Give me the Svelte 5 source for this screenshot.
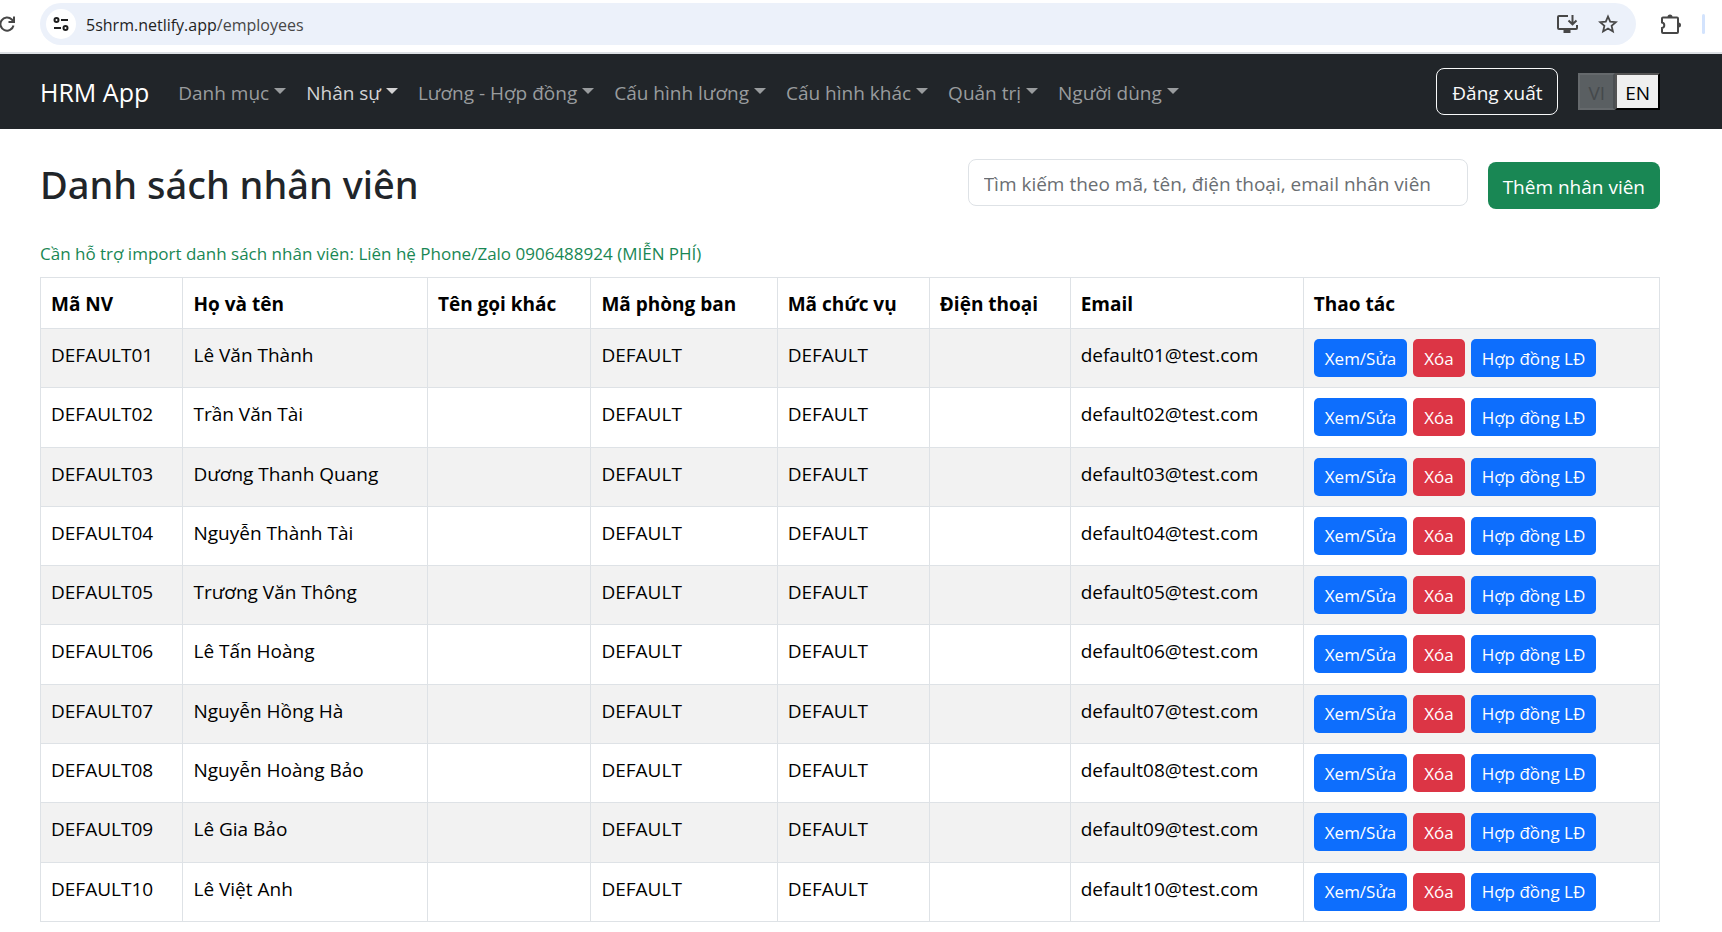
<script lang="ts">
  const menus = ['Danh mục', 'Nhân sự', 'Lương - Hợp đồng', 'Cấu hình lương', 'Cấu hình khác', 'Quản trị', 'Người dùng'];
  const names = [
    'Lê Văn Thành',
    'Trần Văn Tài',
    'Dương Thanh Quang',
    'Nguyễn Thành Tài',
    'Trương Văn Thông',
    'Lê Tấn Hoàng',
    'Nguyễn Hồng Hà',
    'Nguyễn Hoàng Bảo',
    'Lê Gia Bảo',
    'Lê Việt Anh'
  ];
  const employees = names.map((name, i) => {
    const no = String(i + 1).padStart(2, '0');
    return { code: `DEFAULT${no}`, name, alias: '', department: 'DEFAULT', position: 'DEFAULT', phone: '', email: `default${no}@test.com` };
  });

  let active = $state('Nhân sự');
  let lang = $state('vi');
  let search = $state('');
</script>

<div class="browser">
  <button class="icon reload" aria-label="Reload">
    <svg width="18" height="18" viewBox="0 0 18 18" fill="none" stroke="#474747" stroke-width="2">
      <path d="M15.500 10.500a6.600 6.600 0 1 1-1.700-6L16 7" />
      <path d="M16 1.500V7h-5.500" />
    </svg>
  </button>
  <div class="address">
    <button class="icon site" aria-label="Site information">
      <svg width="18" height="18" viewBox="0 0 18 18" fill="none" stroke="#1f1f1f" stroke-width="2">
        <circle cx="4.500" cy="5" r="2" />
        <path d="M9 5h7M2 13h7" />
        <circle cx="13.500" cy="13" r="2" />
      </svg>
    </button>
    <span class="url">5shrm.netlify.app<span>/employees</span></span>
    <button class="icon" aria-label="Install app">
      <svg width="22" height="20" viewBox="0 0 22 20" fill="none" stroke="#474747" stroke-width="2">
        <path d="M12 2H3a1 1 0 0 0-1 1v11a1 1 0 0 0 1 1h17a1 1 0 0 0 1-1v-3" />
        <path d="M16.500 1v9M12.500 6.500l4 3.800 4-3.800" />
        <path d="M7.500 17.500h7" stroke-width="3" />
      </svg>
    </button>
    <button class="icon" aria-label="Bookmark this page">
      <svg width="20" height="20" viewBox="0 0 20 20" fill="none" stroke="#474747" stroke-width="1.8">
        <path d="M10 2.500l2.200 5.200 5.600.5-4.200 3.700 1.300 5.500L10 14.500l-4.900 2.900 1.300-5.500-4.200-3.700 5.600-.5z" />
      </svg>
    </button>
  </div>
  <button class="icon" aria-label="Extensions">
    <svg width="22" height="22" viewBox="0 0 22 22" fill="none" stroke="#474747" stroke-width="2">
      <path d="M3 4.500h14a1 1 0 0 1 1 1V19a1 1 0 0 1-1 1H3a1 1 0 0 1-1-1v-4a2.800 2.800 0 0 0 0-5.500v-4a1 1 0 0 1 1-1z" />
      <path d="M7.500 4a2.500 2.500 0 0 1 5 0zM18.500 9.500a2.500 2.500 0 0 1 0 5z" fill="#474747" stroke="none" />
    </svg>
  </button>
  <span class="divider"></span>
</div>

<nav>
  <a class="brand" href="/">HRM App</a>
  <ul>
    {#each menus as menu}
      <li><button class={["menu", menu === active ? "active" : ""]} aria-haspopup="true" onclick={() => active = menu}>{menu}</button></li>
    {/each}
  </ul>
  <button class="logout">Đăng xuất</button>
  <div class="langs">
    <button disabled={lang === 'vi'} onclick={() => lang = 'vi'}>VI</button>
    <button disabled={lang === 'en'} onclick={() => lang = 'en'}>EN</button>
  </div>
</nav>

<main>
  <header>
    <h1>Danh sách nhân viên</h1>
    <input type="search" aria-label="Tìm kiếm" placeholder="Tìm kiếm theo mã, tên, điện thoại, email nhân viên" bind:value={search} />
    <button class="add">Thêm nhân viên</button>
  </header>
  <p>Cần hỗ trợ import danh sách nhân viên: Liên hệ Phone/Zalo 0906488924 (MIỄN PHÍ)</p>
  <table>
    <thead>
      <tr>
        <th class="code">Mã NV</th>
        <th class="name">Họ và tên</th>
        <th class="alias">Tên gọi khác</th>
        <th class="department">Mã phòng ban</th>
        <th class="position">Mã chức vụ</th>
        <th class="phone">Điện thoại</th>
        <th class="email">Email</th>
        <th>Thao tác</th>
      </tr>
    </thead>
    <tbody>
      {#each employees as e}
        <tr>
          <td>{e.code}</td>
          <td>{e.name}</td>
          <td>{e.alias}</td>
          <td>{e.department}</td>
          <td>{e.position}</td>
          <td>{e.phone}</td>
          <td>{e.email}</td>
          <td class="tools">
            <div class="actions">
              <button>Xem/Sửa</button>
              <button class="danger">Xóa</button>
              <button>Hợp đồng LĐ</button>
            </div>
          </td>
        </tr>
      {/each}
    </tbody>
  </table>
</main>

<style>
  :global(body) {
    margin: 0;
    background: #fff;
    color: #212529;
    font: 19px/30px "Segoe UI", "Open Sans", "Noto Sans", sans-serif;
  }

  button, input {
    box-sizing: border-box;
    font: inherit;
  }

  .browser {
    display: flex;
    align-items: center;
    gap: 20px;
    height: 48px;
    padding-bottom: 4px;
    border-bottom: 2px solid #dcdfe3;
  }

  .icon {
    display: flex;
    padding: 0;
    border: 0;
    background: none;
  }

  .reload {
    margin-left: -2px;
  }

  .address {
    display: flex;
    flex: 1;
    align-items: center;
    gap: 20px;
    height: 42px;
    box-sizing: border-box;
    margin: 0 4px;
    padding: 0 18px 0 6px;
    border-radius: 21px;
    background: #ecf1fa;
  }

  .site {
    justify-content: center;
    align-items: center;
    width: 30px;
    height: 30px;
    margin-right: -10px;
    border-radius: 50%;
    background: #fff;
  }

  .url {
    flex: 1;
    padding-top: 1px;
    color: #1f1f1f;
    font-size: 16px;

    span {
      color: #474747;
    }
  }

  .divider {
    width: 3px;
    height: 20px;
    margin-right: 17px;
    border-radius: 2px;
    background: #d3e3fd;
  }

  nav {
    display: flex;
    align-items: center;
    padding: 14px 62px 14px 40px;
    background: #212529;

    ul {
      display: flex;
      flex: 1;
      margin: 0 0 0 19px;
      padding: 0;
      list-style: none;
    }
  }

  .brand {
    padding-top: 1px;
    color: #fff;
    font-size: 25px;
    text-decoration: none;
  }

  .menu {
    display: flex;
    align-items: center;
    gap: 5px;
    padding: 9px 10px 7px;
    border: 0;
    background: none;
    color: #999c9e;

    &::after {
      content: "";
      margin-bottom: 4px;
      border: 6px solid transparent;
      border-top-color: currentColor;
      border-bottom: 0;
    }

    &.active {
      color: #d3d3d4;
    }
  }

  .logout {
    height: 47px;
    padding: 2px 15px 0;
    border: 1px solid #f8f9fa;
    border-radius: 8px;
    background: none;
    color: #f8f9fa;
  }

  .langs {
    display: flex;
    margin-left: 20px;

    button {
      height: 37px;
      padding: 2px 8px 0;
      border: 2px outset #000;
      background: #efefef;
      color: #000;
      line-height: 30px;

      &:disabled {
        border: 2px solid #65696c;
        border-right-color: #4b4f52;
        background: #5a5f62;
        color: #45494c;
      }
    }
  }

  main {
    padding: 30px 62px 10px 40px;
  }

  header {
    display: flex;
    align-items: flex-end;
    gap: 20px;

    h1 {
      flex: 1;
      margin: 0;
      font-family: "Segoe UI", "Noto Sans", sans-serif;
      font-size: 38px;
      font-weight: 500;
      line-height: 50px;
    }

    input {
      width: 500px;
      height: 47px;
      margin-bottom: 3px;
      padding: 2px 15px 0;
      border: 1px solid #dee2e6;
      border-radius: 8px;

      &::placeholder {
        color: #6a6e72;
      }
    }
  }

  .add {
    height: 47px;
    padding: 2px 15px 0;
    border: 0;
    border-radius: 8px;
    background: #198754;
    color: #fff;
  }

  p {
    margin: 32px 0 10px;
    color: #198754;
    font-size: 17px;
    line-height: 26px;
  }

  table {
    width: 100%;
    height: 645px;
    table-layout: fixed;
    border-collapse: collapse;
    color: #000;
  }

  thead tr {
    height: 51px;
  }

  th, td {
    box-sizing: border-box;
    padding: 11px 10px 9px;
    border: 1px solid #dee2e6;
    text-align: left;
    vertical-align: top;
  }

  .tools {
    padding: 10px;
  }

  tbody tr:nth-child(odd) {
    background: #f2f2f2;
  }

  .code { width: 8.8%; }
  .name { width: 15.1%; }
  .alias { width: 10.1%; }
  .department { width: 11.5%; }
  .position { width: 9.4%; }
  .phone { width: 8.7%; }
  .email { width: 14.4%; }

  .actions {
    display: flex;
    gap: 6px;

    button {
      height: 38px;
      padding: 1px 11px 0;
      border: 0;
      border-radius: 5px;
      background: #0d6efd;
      color: #fff;
      font-size: 17px;
      white-space: nowrap;
    }

    .danger {
      background: #dc3545;
    }
  }
</style>
